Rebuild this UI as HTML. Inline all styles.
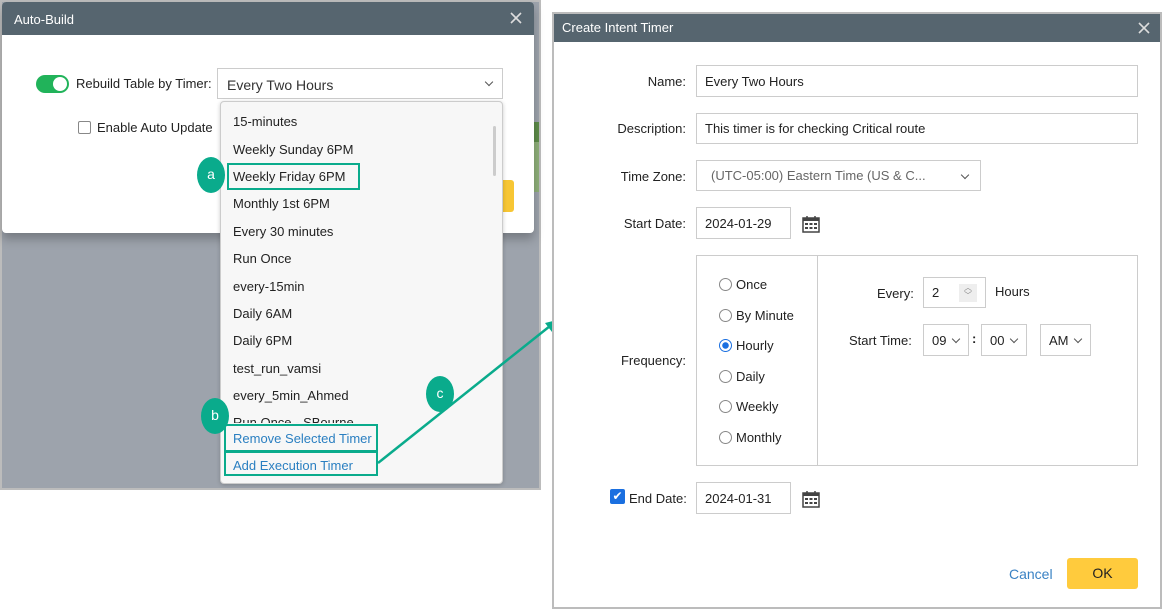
<!DOCTYPE html>
<html><head><style>
*{box-sizing:border-box;margin:0;padding:0}
body{width:1162px;height:609px;background:#fff;position:relative;overflow:hidden;font-family:"Liberation Sans",sans-serif;font-size:13px;color:#222}
.a{position:absolute}
.in{position:absolute;border:1px solid #ccc;background:#fff;padding-left:8px;display:flex;align-items:center;font-size:13px}
.lbl{position:absolute;right:476px;font-size:13px;text-align:right}
.radio{position:absolute;left:719px;display:flex;align-items:center;font-size:13px}
.radio i{width:13px;height:13px;border:1.5px solid #888;border-radius:50%;margin-right:4px;display:inline-block}
.dd li{list-style:none;position:absolute;left:12px;font-size:13px}
.call{position:absolute;width:28px;height:36px;border-radius:50%;background:#0aab8c;color:#fff;font-size:14px;text-align:center;line-height:34px}
.box{position:absolute;border:2.5px solid #0aab8c}
.chev{display:inline-block;width:6px;height:6px;border-right:1.5px solid #555;border-bottom:1.5px solid #555;transform:rotate(45deg);position:absolute}
</style></head><body>
<svg width="0" height="0" style="position:absolute"><defs><symbol id="cal" viewBox="0 0 18 18"><rect x="1" y="3" width="16" height="14" fill="none" stroke="#444" stroke-width="1.5"/><rect x="1" y="3" width="16" height="3" fill="#444"/><line x1="5" y1="1" x2="5" y2="4" stroke="#444" stroke-width="1.5"/><line x1="13" y1="1" x2="13" y2="4" stroke="#444" stroke-width="1.5"/><g fill="#444"><rect x="3" y="8" width="3" height="2"/><rect x="7.5" y="8" width="3" height="2"/><rect x="12" y="8" width="3" height="2"/><rect x="3" y="12" width="3" height="2"/><rect x="7.5" y="12" width="3" height="2"/><rect x="12" y="12" width="3" height="2"/></g></symbol></defs></svg>
<div class="a" style="left:0;top:0;width:541px;height:490px;background:#9da3ac;border:2px solid #bcbcbc"></div>
<div class="a" style="left:534px;top:122px;width:5px;height:20px;background:#5e8c4a"></div>
<div class="a" style="left:534px;top:142px;width:5px;height:50px;background:#8fb07a"></div>
<div class="a" style="left:2px;top:2px;width:532px;height:231px;background:#fff;border-radius:4px;box-shadow:0 6px 10px rgba(0,0,0,.25);overflow:hidden">
 <div style="height:33px;background:#56656f;color:#fff;font-size:13px;padding:10px 12px">Auto-Build</div>
 <svg class="a" style="right:12px;top:10px" width="12" height="12"><path d="M1 1L11 11M11 1L1 11" stroke="#ddd" stroke-width="1.6"/></svg>
 <div class="a" style="left:34px;top:73px;width:33px;height:18px;border-radius:9px;background:#21b35a"><div style="position:absolute;right:2px;top:2px;width:14px;height:14px;border-radius:50%;background:#fff"></div></div>
 <div class="a" style="left:74px;top:74px">Rebuild Table by Timer:</div>
 <div class="a" style="left:215px;top:66px;width:286px;height:31px;border:1px solid #ccc;padding:8px 9px;font-size:14px;color:#333">Every Two Hours<span class="chev" style="right:10px;top:10px"></span></div>
 <div class="a" style="left:76px;top:119px;width:13px;height:13px;border:1.5px solid #888;border-radius:2px"></div>
 <div class="a" style="left:95px;top:118px">Enable Auto Update</div>
 <div class="a" style="left:490px;top:178px;width:22px;height:32px;background:#f7c634;border-radius:3px"></div>
</div>
<div class="a dd" style="left:220px;top:101px;width:283px;height:383px;background:#f7f7f7;border:1px solid #ccc;border-radius:4px;box-shadow:0 1px 4px rgba(0,0,0,.2)">
 <div class="a" style="right:6px;top:24px;width:3px;height:50px;background:#ccc;border-radius:2px"></div>
 <ul>
 <li style="top:12px">15-minutes</li><li style="top:40px">Weekly Sunday 6PM</li><li style="top:67px">Weekly Friday 6PM</li><li style="top:94px">Monthly 1st 6PM</li><li style="top:122px">Every 30 minutes</li><li style="top:149px">Run Once</li><li style="top:177px">every-15min</li><li style="top:204px">Daily 6AM</li><li style="top:231px">Daily 6PM</li><li style="top:259px">test_run_vamsi</li><li style="top:286px">every_5min_Ahmed</li>
 <li style="top:313px;height:8px;overflow:hidden">Run Once - SBourne</li>
 <li style="top:329px;color:#2a7fc1">Remove Selected Timer</li><li style="top:356px;color:#2a7fc1">Add Execution Timer</li>
 </ul>
</div>
<div class="box" style="left:227px;top:163px;width:133px;height:27px"></div>
<div class="box" style="left:224px;top:424px;width:154px;height:28px"></div>
<div class="box" style="left:224px;top:451px;width:154px;height:25px"></div>
<div class="call" style="left:197px;top:157px">a</div>
<div class="call" style="left:201px;top:398px">b</div>
<div class="call" style="left:426px;top:376px">c</div>
<svg class="a" style="left:0;top:0" width="1162" height="609"><line x1="378" y1="463" x2="550" y2="326" stroke="#0aab8c" stroke-width="2.5"/><polygon points="557,320 545,323 552,332" fill="#0aab8c"/></svg>
<div class="a" style="left:552px;top:12px;width:610px;height:597px;border:2px solid #bcbcbc;background:#fff"></div>
<div class="a" style="left:554px;top:14px;width:606px;height:28px;background:#56656f;color:#fff;padding:6px 8px;font-size:13px">Create Intent Timer<svg class="a" style="right:10px;top:8px" width="12" height="12"><path d="M1 1L11 11M11 1L1 11" stroke="#ddd" stroke-width="1.6"/></svg></div>
<div class="lbl" style="top:74px">Name:</div>
<div class="in" style="left:696px;top:65px;width:442px;height:32px">Every Two Hours</div>
<div class="lbl" style="top:121px">Description:</div>
<div class="in" style="left:696px;top:113px;width:442px;height:31px">This timer is for checking Critical route</div>
<div class="lbl" style="top:169px">Time Zone:</div>
<div class="in" style="left:696px;top:160px;width:285px;height:31px;padding-left:14px;color:#666">(UTC-05:00) Eastern Time (US &amp; C...<span class="chev" style="right:12px;top:11px"></span></div>
<div class="lbl" style="top:216px">Start Date:</div>
<div class="in" style="left:696px;top:207px;width:95px;height:32px">2024-01-29</div>
<svg class="a" style="left:802px;top:215px" width="18" height="18"><use href="#cal"/></svg>
<div class="lbl" style="top:353px">Frequency:</div>
<div class="a" style="left:696px;top:255px;width:442px;height:211px;border:1px solid #ccc"></div>
<div class="a" style="left:817px;top:255px;width:1px;height:211px;background:#ccc"></div>
<div class="radio" style="top:277px"><i></i>Once</div>
<div class="radio" style="top:308px"><i></i>By Minute</div>
<div class="radio" style="top:338px"><i style="border:1.5px solid #1a6fe0;background:radial-gradient(#1a6fe0 0 3px,#fff 3.5px)"></i>Hourly</div>
<div class="radio" style="top:369px"><i></i>Daily</div>
<div class="radio" style="top:399px"><i></i>Weekly</div>
<div class="radio" style="top:430px"><i></i>Monthly</div>
<div class="a" style="left:877px;top:286px">Every:</div>
<div class="in" style="left:923px;top:277px;width:63px;height:31px">2<span class="a" style="right:8px;top:6px;width:18px;height:18px;background:#eee;font-size:8px;color:#888;text-align:center;line-height:8px">︿<br>﹀</span></div>
<div class="a" style="left:995px;top:284px">Hours</div>
<div class="a" style="left:849px;top:333px">Start Time:</div>
<div class="in" style="left:923px;top:324px;width:46px;height:32px">09<span class="chev" style="right:9px;top:11px"></span></div>
<div class="a" style="left:972px;top:331px;font-weight:bold">:</div>
<div class="in" style="left:981px;top:324px;width:46px;height:32px">00<span class="chev" style="right:9px;top:11px"></span></div>
<div class="in" style="left:1040px;top:324px;width:51px;height:32px">AM<span class="chev" style="right:9px;top:11px"></span></div>
<div class="a" style="left:610px;top:489px;width:15px;height:15px;background:#1a6fe0;border-radius:2px;color:#fff;font-size:12px;line-height:15px;text-align:center">✔</div>
<div class="a" style="left:629px;top:491px">End Date:</div>
<div class="in" style="left:696px;top:482px;width:95px;height:32px">2024-01-31</div>
<svg class="a" style="left:802px;top:490px" width="18" height="18"><use href="#cal"/></svg>
<div class="a" style="left:1009px;top:566px;color:#3a82c4;font-size:14px">Cancel</div>
<div class="a" style="left:1067px;top:558px;width:71px;height:31px;background:#ffcb3d;border-radius:3px;text-align:center;line-height:31px;font-size:14px">OK</div>
</body></html>
